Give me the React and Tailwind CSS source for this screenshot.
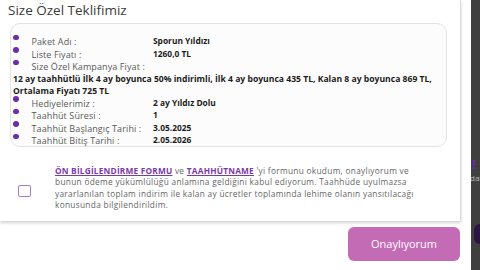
import React from "react";

const rowsTop = [
  { label: "Paket Adı :", value: "Sporun Yıldızı" },
  { label: "Liste Fiyatı :", value: "1260,0 TL" },
  { label: "Size Özel Kampanya Fiyat :", value: "" },
];

const rowsBottom = [
  { label: "Hediyelerimiz :", value: "2 ay Yıldız Dolu" },
  { label: "Taahhüt Süresi :", value: "1" },
  { label: "Taahhüt Başlangıç Tarihi :", value: "3.05.2025" },
  { label: "Taahhüt Bitiş Tarihi :", value: "2.05.2026" },
];

const Row = ({ label, value }) => (
  <li className="flex h-[12.5px] items-center">
    <span className="w-[5.5px] h-[5.5px] rounded-full bg-[#6a2ea6] -mt-[9px] shrink-0" />
    <span className="w-[134.5px] pl-[13px] text-[9px] tracking-[0.1px] text-[#5a5a5a] whitespace-nowrap">{label}</span>
    <span className="text-[8.4px] font-bold text-[#1d1d1d] whitespace-nowrap">{value}</span>
  </li>
);

export default function App() {
  return (
    <div
      className="flex w-[480px] h-[270px] bg-white overflow-hidden"
      style={{ fontFamily: '"Open Sans", "Liberation Sans", sans-serif' }}
    >
      <div className="w-[471px] shrink-0 flex flex-col">
        <div className="w-[461px] h-[221px] bg-white border-r border-[#d9d9d9] shadow-[0_2px_3px_rgba(0,0,0,0.18)] pl-[10px] pt-[1px]">
          <h2 className="text-[13.5px] leading-[18px] text-[#3a3a3a] -ml-[2px]">Size Özel Teklifimiz</h2>

          <div className="mt-[4px] w-[437px] h-[124px] rounded-[10px] border border-[#e3e3e3] bg-[#fcfcfc] pt-[11.5px] pl-[2px]">
            <ul>
              {rowsTop.map((r) => (
                <Row key={r.label} {...r} />
              ))}
            </ul>
            <p className="text-[8.6px] leading-[12px] font-bold text-[#1d1d1d] whitespace-nowrap">
              12 ay taahhütlü İlk 4 ay boyunca 50% indirimli, İlk 4 ay boyunca 435 TL, Kalan 8 ay boyunca 869 TL,
              <br />
              Ortalama Fiyatı 725 TL
            </p>
            <ul>
              {rowsBottom.map((r) => (
                <Row key={r.label} {...r} />
              ))}
            </ul>
          </div>

          <div className="flex items-start mt-[18px]">
            <div className="w-[13px] h-[12px] ml-[8px] mt-[20px] rounded-[2px] border-[1.5px] border-[#a47ad6] bg-white shrink-0" />
            <p className="ml-[24px] text-[8.3px] leading-[11.3px] tracking-[0.3px] text-[#666] whitespace-nowrap">
              <a className="font-bold tracking-[0.2px] text-[#7a3aa8] underline">ÖN BİLGİLENDİRME FORMU</a> ve{" "}
              <a className="font-bold tracking-[0.2px] text-[#7a3aa8] underline">TAAHHÜTNAME</a> 'yi formunu okudum, onaylıyorum ve
              <br />
              bunun ödeme yükümlülüğü anlamına geldiğini kabul ediyorum. Taahhüde uyulmazsa
              <br />
              yararlanılan toplam indirim ile kalan ay ücretler toplamında lehime olanın yansıtılacağı
              <br />
              konusunda bilgilendirildim.
            </p>
          </div>
        </div>

        <div className="flex justify-end pr-[11px] pt-[6px]">
          <button className="w-[112px] h-[34px] rounded-[6px] bg-[#c46bb5] text-white text-[11px]">
            Onaylıyorum
          </button>
        </div>
      </div>

      <div className="flex-1 bg-[#3f3f3f] flex flex-col pt-[156px] overflow-hidden">
        <span className="text-[13px] font-bold text-[#6a2ea6] leading-[16px] pl-[1px]">!</span>
        <span className="text-[8px] text-[#bbb] leading-[12px] -ml-[1px] whitespace-nowrap">dal</span>
        <div className="mt-[40px] ml-[3px] w-[20px] h-[20px] rounded-l-[6px] bg-[#2a1545]" />
      </div>
    </div>
  );
}
